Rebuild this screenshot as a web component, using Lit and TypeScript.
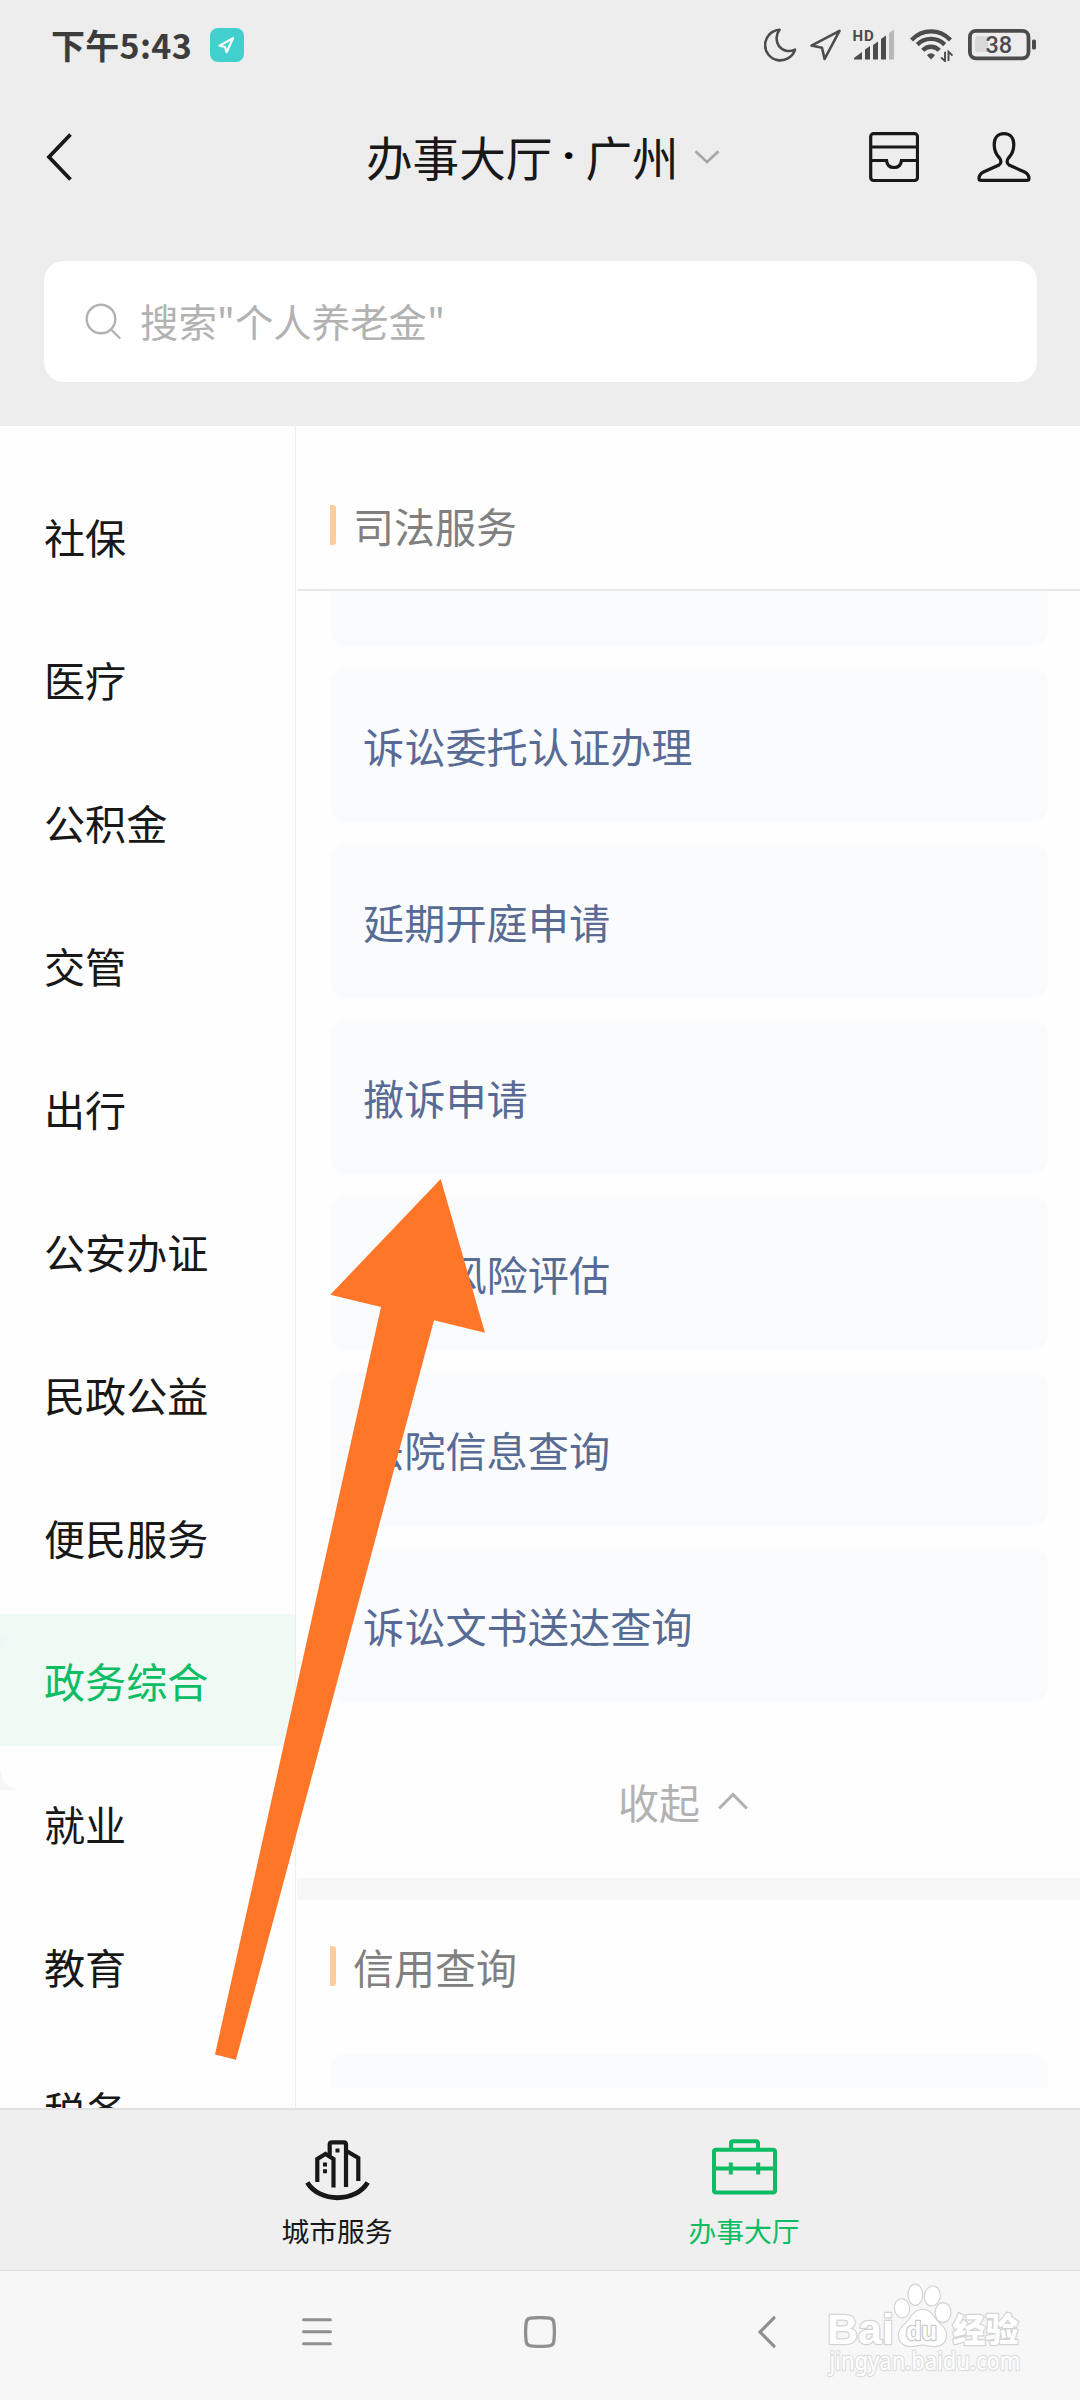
import { LitElement, html, css, svg } from "lit";
import { customElement, property } from "lit/decorators.js";
import { classMap } from "lit/directives/class-map.js";

const CATEGORIES = [
  "社保", "医疗", "公积金", "交管", "出行", "公安办证",
  "民政公益", "便民服务", "政务综合", "就业", "教育", "税务",
];
const ACTIVE_CATEGORY = "政务综合";

const SERVICES = [
  "诉讼委托认证办理", "延期开庭申请", "撤诉申请",
  "诉讼风险评估", "法院信息查询", "诉讼文书送达查询",
];

const shared = css`
  * { box-sizing: border-box; }
  svg { display: block; flex: none; }
`;

@customElement("status-bar")
class StatusBar extends LitElement {
  static styles = [shared, css`
    :host { display: block; }
    .bar { display: flex; align-items: center; height: 90px; padding: 0 44px 0 51px; }
    .time { font-size: 34px; line-height: 40px; font-weight: 700; letter-spacing: 0.3px; color: #3c3c3c; width: 159px; white-space: nowrap; }
    .badge { width: 34px; height: 34px; border-radius: 8px; background: #42d0cf; }
    .icons { display: flex; align-items: center; margin-left: auto; color: #4c4c4c; }
    .moon { margin-right: 13px; }
    .place { margin-right: 11px; }
    .signal { margin-right: 15px; }
    .wifi { margin-right: 15px; }
    .hd { font: 700 15px Roboto, sans-serif; letter-spacing: 1px; }
    .level { font: 500 23.500px Roboto, sans-serif; }
  `];
  render() {
    return html`
      <div class="bar">
        <span class="time">下午5:43</span>
        <span class="badge">
          <svg width="34" height="34" viewBox="0 0 34 34" fill="none" stroke="#fff" stroke-width="2.2" stroke-linejoin="round">
            <path d="M23 10.2L9.5 17.6L15 19L16.6 24.2Z" />
          </svg>
        </span>
        <div class="icons">
          <svg class="moon" width="33" height="34" viewBox="0 0 33 34" fill="none" stroke="currentColor" stroke-width="2.6" stroke-linejoin="round">
            <path d="M15.5 1.8A15.3 15.3 0 1 0 31 21.6C25 24.3 18.5 23 14.9 18C11.5 13 12 6.500 15.500 1.800Z" />
          </svg>
          <svg class="place" width="31" height="34" viewBox="0 -1 31 34" fill="none" stroke="currentColor" stroke-width="2.6" stroke-linejoin="round">
            <path d="M29.500 1.800L1.500 16.600L12 18.800L14.600 30Z" />
          </svg>
          <svg class="signal" width="43" height="34" viewBox="0 0 43 34" fill="currentColor">
            <text class="hd" x="0.500" y="12.500">HD</text>
            <path d="M2 31.500V30L10 24V31.500Z M13 31.500V21.500L18 18V31.500Z M21 31.500V17L26 13.500V31.500Z M29 31.500V11L34 7.500V31.500Z" />
            <path d="M37 31.500V5L42 1.500V31.500Z" fill="#b8b8b8" />
          </svg>
          <svg class="wifi" width="43" height="34" viewBox="0 -1 43 34" fill="none" stroke="currentColor" stroke-width="4.400">
            <path d="M1.500 11C12.500 -0.500 29.500 -0.500 40.500 11M7.300 15.600C15 8 27 8 34.700 15.600M12.700 21.300C17.500 16.500 24.500 16.500 29.300 21.300" />
            <path d="M17 26.300C19.300 23.500 22.700 23.500 25 26.300L21 30.500Z" fill="currentColor" stroke="none" />
            <path d="M35 22.700V32L31 28.500M38.500 32V22.700L42.500 26.500" stroke-width="1.900" />
          </svg>
          <svg width="68" height="34" viewBox="0 -1 68 34" fill="none">
            <rect x="1.900" y="1.900" width="58.600" height="27.400" rx="6" stroke="currentColor" stroke-width="3.800" />
            <path d="M10 7H20V23H10Q7 23 7 20V10Q7 7 10 7Z" fill="#d8d8d8" />
            <text class="level" x="17.500" y="24" fill="currentColor">38</text>
            <rect x="64" y="10.500" width="4" height="10" rx="1.500" fill="currentColor" />
          </svg>
        </div>
      </div>
    `;
  }
}

@customElement("page-header")
class PageHeader extends LitElement {
  static styles = [shared, css`
    :host { display: block; }
    .row { display: flex; align-items: center; height: 134px; padding: 0 49px 0 46px; color: #181818; }
    .title { display: flex; align-items: center; height: 60px; margin-left: 293px; font-size: 46.600px; line-height: 57px; }
    .name { height: 60px; }
    .dot { height: 60px; width: 33px; text-align: center; font-family: Roboto, sans-serif; font-weight: 700; color: #000; }
    .more { margin-left: 15px; }
    .actions { display: flex; gap: 58px; margin-left: auto; }
    .search { display: flex; align-items: center; height: 121px; margin: 37px 43px 44px 44px; padding-left: 41px; border-radius: 20px; background: #fff; color: #b2b2b2; font-size: 38.400px; }
    .hint { margin-left: 18px; padding-bottom: 3px; white-space: nowrap; }
  `];
  render() {
    return html`
      <div class="row">
        <svg width="27" height="48" viewBox="0 0 27 48" fill="none" stroke="currentColor" stroke-width="3.800">
          <path d="M24.500 1.500L3 24L24.500 46.500" />
        </svg>
        <div class="title">
          <span class="name">办事大厅</span><span class="dot">·</span><span class="name">广州</span>
          <svg class="more" width="26" height="14" viewBox="0 0 26 14" fill="none" stroke="#a6a6a6" stroke-width="2.600">
            <path d="M1.500 1.200L13 12L24.500 1.200" />
          </svg>
        </div>
        <div class="actions">
          <svg width="50" height="50" viewBox="0 0 50 50" fill="none" stroke="currentColor" stroke-width="3.200">
            <rect x="1.700" y="1.700" width="46.800" height="46.800" rx="3" />
            <path d="M2 15H48M2 28.500H17.500C18 33 21 35.500 25 35.500S32 33 32.500 28.500H48" />
          </svg>
          <svg width="54" height="50" viewBox="0 0 54 50" fill="none" stroke="currentColor" stroke-width="3.200" stroke-linejoin="round">
            <path d="M27 1.700C20.500 1.700 17.200 6.500 17.200 12.500C17.200 18.500 19 22.500 22.500 26C24.500 28.500 24.300 31.500 22 33L7 39.800C3.500 41.500 2 44 2 46.500Q2 48.400 4 48.400H50Q52 48.400 52 46.500C52 44 50.500 41.500 47 39.800L32 33C29.700 31.500 29.500 28.500 31.500 26C35 22.500 36.800 18.500 36.800 12.500C36.800 6.500 33.500 1.700 27 1.700Z" />
          </svg>
        </div>
      </div>
      <div class="search">
        <svg width="37" height="37" viewBox="0 0 37 37" fill="none" stroke="currentColor" stroke-width="2.400">
          <circle cx="16" cy="16" r="14.300" />
          <path d="M26 26.500L35.200 35.500" />
        </svg>
        <span class="hint">搜索"个人养老金"</span>
      </div>
    `;
  }
}

@customElement("category-nav")
class CategoryNav extends LitElement {
  static styles = [shared, css`
    :host { display: block; width: 297px; flex: none; overflow: hidden; }
    .list { display: flex; flex-direction: column; gap: 11px; height: 100%; padding-top: 44px; border-right: 1px solid #ededed; margin-right: 1px; }
    .item { position: relative; display: flex; flex: none; align-items: center; height: 132px; padding: 0 0 1px 44px; font-size: 41.100px; color: #181818; white-space: nowrap; }
    .active { color: #0dbd63; background: #f0faf5; }
    .corner { position: absolute; left: 0; top: 155px; }
    .corner-top { position: absolute; left: 0; top: 22px; }
  `];
  render() {
    return html`
      <div class="list">
        ${CATEGORIES.map((name) => {
          const active = name === ACTIVE_CATEGORY;
          return html`
            <div class=${classMap({ item: true, active })}>
              ${name}
              ${active ? html`
                <svg class="corner" width="20" height="21" viewBox="0 0 20 21"><path d="M0 0Q2 19 20 21H0Z" fill="#f6f6f6" /></svg>
                <svg class="corner-top" width="14" height="18" viewBox="0 0 14 18"><path d="M0 0H12Q3 4 0 18Z" fill="#f1f7f4" /></svg>
              ` : ""}
            </div>
          `;
        })}
      </div>
    `;
  }
}

@customElement("section-title")
class SectionTitle extends LitElement {
  @property() label = "";
  static styles = [shared, css`
    :host { display: block; }
    .title { display: flex; align-items: center; height: 132px; padding-left: 33px; font-size: 41px; color: #808080; }
    .mark { width: 6px; height: 40px; margin-right: 17px; border-radius: 0 3px 3px 0; background: #fbcd9d; }
  `];
  render() {
    return html`<div class="title"><span class="mark"></span><span>${this.label}</span></div>`;
  }
}

@customElement("service-pane")
class ServicePane extends LitElement {
  static styles = [shared, css`
    :host { display: flex; flex-direction: column; flex: 1; overflow: hidden; }
    .sticky { flex: none; height: 165px; padding-top: 33px; border-bottom: 2px solid #e8e8e8; }
    .cards { display: flex; flex: none; flex-direction: column; gap: 22px; padding: 0 32px 0 33px; }
    .card { display: flex; align-items: center; height: 154px; padding-left: 33px; border-radius: 16px; background: #fafbfd; font-size: 41.200px; color: #576b95; white-space: nowrap; }
    .tail { height: 55px; border-radius: 0 0 16px 16px; }
    .head { height: 34px; border-radius: 16px 16px 0 0; }
    .collapse { display: flex; flex: none; align-items: center; justify-content: center; gap: 18px; height: 154px; margin-top: 22px; padding-right: 11px; font-size: 41px; color: #b2b2b2; }
    .divider { flex: none; height: 22px; background: #f7f7f7; }
    .next { flex: none; height: 154px; }
  `];
  render() {
    return html`
      <div class="sticky"><section-title label="司法服务"></section-title></div>
      <div class="cards">
        <div class="card tail"></div>
        ${SERVICES.map((name) => html`<div class="card">${name}</div>`)}
      </div>
      <div class="collapse">
        <span>收起</span>
        <svg width="30" height="18" viewBox="0 0 30 18" fill="none" stroke="currentColor" stroke-width="3.200">
          <path d="M1.200 16.500L15 2.500L28.800 16.500" />
        </svg>
      </div>
      <div class="divider"></div>
      <div class="next"><section-title label="信用查询"></section-title></div>
      <div class="cards"><div class="card head"></div></div>
    `;
  }
}

@customElement("tab-bar")
class TabBar extends LitElement {
  static styles = [shared, css`
    :host { display: block; flex: none; }
    .bar { display: flex; gap: 203px; height: 162px; padding: 26px 0 0 235px; border-top: 2px solid #e2e2e2; background: #efefef; }
    .tab { display: flex; flex-direction: column; align-items: center; width: 204px; font-size: 27.800px; line-height: 40px; color: #181818; }
    .label { margin-top: 6px; }
    .current { color: #0dbd63; }
  `];
  render() {
    return html`
      <div class="bar">
        <div class="tab">
          <svg width="75" height="68" viewBox="0 0 75 68" fill="none" stroke="currentColor" stroke-width="4.200">
            <path d="M7.300 46.500C19.500 66.800 55.500 66.800 67.700 46.500" stroke-width="4.800" />
            <path d="M17.300 46V23L25.500 18L33.500 23V51.500" />
            <path d="M29.700 19V8.500Q29.700 6.300 32 6.300H43.700Q46 6.300 46 8.500V51" />
            <path d="M46.500 15L58.300 22V45" />
            <path d="M35.500 12.500H39.500V16.500H35.500ZM23 26.500H27V30.500H23ZM23 33.300H27V37.300H23Z" fill="currentColor" stroke="none" />
          </svg>
          <span class="label">城市服务</span>
        </div>
        <div class="tab current">
          <svg width="65" height="68" viewBox="0 0 65 68" fill="none" stroke="currentColor" stroke-width="4">
            <rect x="2" y="13.800" width="61" height="42.800" rx="2" />
            <path d="M19 13V7.300Q19 5.200 21 5.200H44Q46 5.200 46 7.300V13M2 32.500H63M18.800 26.500V38.500M46.200 26.500V38.500" />
          </svg>
          <span class="label">办事大厅</span>
        </div>
      </div>
    `;
  }
}

@customElement("system-nav")
class SystemNav extends LitElement {
  static styles = [shared, css`
    :host { display: block; flex: none; }
    .bar { display: flex; height: 130px; padding: 45px 304px 0 302px; border-top: 1px solid #dcdcdc; background: #f7f7f7; color: #909090; }
    .home { margin-left: 192px; }
    .back { margin-left: auto; }
  `];
  render() {
    return html`
      <div class="bar">
        <svg width="30" height="32" viewBox="0 0 30 32" stroke="currentColor" stroke-width="3" stroke-linecap="round">
          <path d="M1.500 3.700H28.500M1.500 15.700H28.500M1.500 27.700H28.500" />
        </svg>
        <svg class="home" width="32" height="32" viewBox="0 0 32 32" fill="none" stroke="currentColor" stroke-width="3.300">
          <path d="M6.500 2.200Q16 1 25.500 2.200Q29.300 2.700 29.800 6.500Q31 16 29.800 25.500Q29.300 29.300 25.500 29.800Q16 31 6.500 29.800Q2.700 29.300 2.200 25.500Q1 16 2.200 6.500Q2.700 2.700 6.500 2.200Z" />
        </svg>
        <svg class="back" width="18" height="32" viewBox="0 0 18 32" fill="none" stroke="currentColor" stroke-width="3.200" stroke-linecap="round">
          <path d="M16 1.800L2 16L16 30.200" />
        </svg>
      </div>
    `;
  }
}

const toes = [
  [122, 48.300, 7, 9, -8],
  [135.300, 34.700, 6.800, 10, 0],
  [152.300, 36, 7.200, 9.500, 12],
  [163, 52.600, 7.300, 9.300, 0],
];

@customElement("app-root")
class AppRoot extends LitElement {
  static styles = [shared, css`
    :host { display: block; font-family: "Noto Sans CJK SC", sans-serif; }
    .screen { position: relative; display: flex; flex-direction: column; width: 1080px; height: 2400px; overflow: hidden; background: #fefefe; }
    .top { flex: none; height: 426px; background: #ededed; }
    .body { display: flex; flex: none; height: 1682px; overflow: hidden; }
    .arrow { position: absolute; left: 0; top: 1160px; }
    .watermark { position: absolute; left: 780px; top: 2260px; }
    .ink { fill: #fff; stroke: #d4d4d4; stroke-width: 2.500px; paint-order: stroke; stroke-linejoin: round; }
    .brand { font: 700 43px "Liberation Sans", sans-serif; }
    .du { font: 700 26px "Liberation Sans", sans-serif; stroke: #c9c9c9; }
    .cn { font: 900 33px "Noto Sans CJK SC", sans-serif; }
    .url { font: 400 24.500px "Noto Sans", sans-serif; stroke: #dedede; }
  `];
  render() {
    return html`
      <div class="screen">
        <div class="top">
          <status-bar></status-bar>
          <page-header></page-header>
        </div>
        <div class="body">
          <category-nav></category-nav>
          <service-pane></service-pane>
        </div>
        <tab-bar></tab-bar>
        <system-nav></system-nav>
        <svg class="arrow" width="500" height="910" viewBox="0 1160 500 910">
          <path d="M440.700 1179L330.300 1294.700L381 1307L215 2054.500L236 2059.700L434 1320.300L485 1332.700Z" fill="#ff7628" />
        </svg>
        <svg class="watermark" width="290" height="140" viewBox="0 0 290 140">
          <text class="ink brand" x="47" y="84" textLength="67" lengthAdjust="spacingAndGlyphs">Bai</text>
          ${toes.map(([cx, cy, rx, ry, turn]) => svg`
            <ellipse class="ink" cx=${cx} cy=${cy} rx=${rx} ry=${ry} transform="rotate(${turn} ${cx} ${cy})" />
          `)}
          <path class="ink" d="M142.500 50C150 50 153 56 156 60C160 65 166 68 166 75C166 82 161 86 154 86C149 86 147 84.500 142.500 84.500C138 84.500 136 86 131 86C124 86 119 82 119 75C119 68 125 65 129 60C132 56 135 50 142.500 50Z" />
          <text class="ink du" x="126" y="80" textLength="31" lengthAdjust="spacingAndGlyphs">du</text>
          <text class="ink cn" x="172.500" y="82" textLength="66" lengthAdjust="spacingAndGlyphs">经验</text>
          <text class="ink url" x="49.500" y="110" textLength="191" lengthAdjust="spacingAndGlyphs">jingyan.baidu.com</text>
        </svg>
      </div>
    `;
  }
}
